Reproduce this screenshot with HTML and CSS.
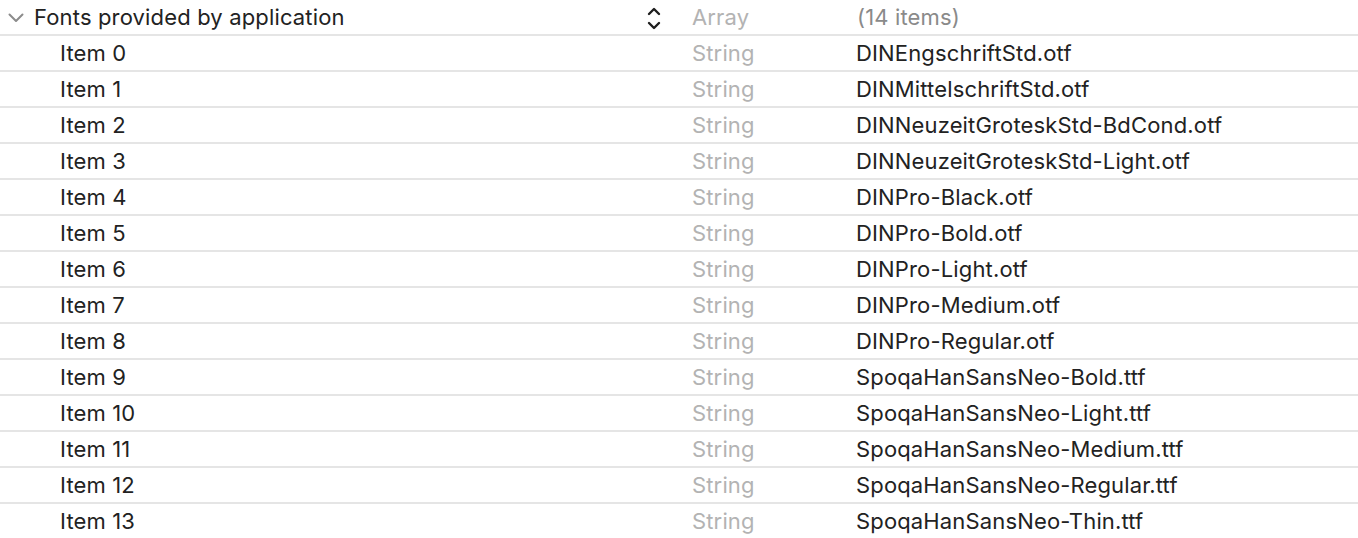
FILE: index.html
```html
<!DOCTYPE html>
<html>
<head>
<meta charset="utf-8">
<link rel="stylesheet" href="styles.css">
</head>
<body>
<div class="table">
  <div class="row parent">
    <div class="key">
      <svg class="disclosure" width="16" height="10" viewBox="0 0 16 10"><path d="M1.5 1.5 L8 8 L14.5 1.5" fill="none" stroke="#8c8c8c" stroke-width="2" stroke-linecap="round" stroke-linejoin="round"/></svg>
      <span>Fonts provided by application</span>
    </div>
    <div class="stepper">
      <svg width="14" height="24" viewBox="0 0 14 24"><path d="M2 7 L7 2 L12 7" fill="none" stroke="#1e1e1e" stroke-width="2.4" stroke-linecap="round" stroke-linejoin="round"/><path d="M2 16 L7 21 L12 16" fill="none" stroke="#1e1e1e" stroke-width="2.4" stroke-linecap="round" stroke-linejoin="round"/></svg>
    </div>
    <div class="type">Array</div>
    <div class="value muted">(14 items)</div>
  </div>
  <div class="row"><div class="key child">Item 0</div><div class="stepper"></div><div class="type">String</div><div class="value">DINEngschriftStd.otf</div></div>
  <div class="row"><div class="key child">Item 1</div><div class="stepper"></div><div class="type">String</div><div class="value">DINMittelschriftStd.otf</div></div>
  <div class="row"><div class="key child">Item 2</div><div class="stepper"></div><div class="type">String</div><div class="value">DINNeuzeitGroteskStd-BdCond.otf</div></div>
  <div class="row"><div class="key child">Item 3</div><div class="stepper"></div><div class="type">String</div><div class="value">DINNeuzeitGroteskStd-Light.otf</div></div>
  <div class="row"><div class="key child">Item 4</div><div class="stepper"></div><div class="type">String</div><div class="value">DINPro-Black.otf</div></div>
  <div class="row"><div class="key child">Item 5</div><div class="stepper"></div><div class="type">String</div><div class="value">DINPro-Bold.otf</div></div>
  <div class="row"><div class="key child">Item 6</div><div class="stepper"></div><div class="type">String</div><div class="value">DINPro-Light.otf</div></div>
  <div class="row"><div class="key child">Item 7</div><div class="stepper"></div><div class="type">String</div><div class="value">DINPro-Medium.otf</div></div>
  <div class="row"><div class="key child">Item 8</div><div class="stepper"></div><div class="type">String</div><div class="value">DINPro-Regular.otf</div></div>
  <div class="row"><div class="key child">Item 9</div><div class="stepper"></div><div class="type">String</div><div class="value">SpoqaHanSansNeo-Bold.ttf</div></div>
  <div class="row"><div class="key child">Item 10</div><div class="stepper"></div><div class="type">String</div><div class="value">SpoqaHanSansNeo-Light.ttf</div></div>
  <div class="row"><div class="key child">Item 11</div><div class="stepper"></div><div class="type">String</div><div class="value">SpoqaHanSansNeo-Medium.ttf</div></div>
  <div class="row"><div class="key child">Item 12</div><div class="stepper"></div><div class="type">String</div><div class="value">SpoqaHanSansNeo-Regular.ttf</div></div>
  <div class="row"><div class="key child">Item 13</div><div class="stepper"></div><div class="type">String</div><div class="value">SpoqaHanSansNeo-Thin.ttf</div></div>
</div>
</body>
</html>
```
FILE: styles.css
```css
html, body {
  margin: 0;
  padding: 0;
  background: #ffffff;
}
body {
  font-family: Inter, "Noto Sans", sans-serif;
  font-size: 22px;
  letter-spacing: 0.15px;
  color: #222222;
  overflow: hidden;
}
.table {
  display: flex;
  flex-direction: column;
}
.row {
  display: grid;
  grid-template-columns: 647px 45px 164px 1fr;
  height: 34px;
  align-items: center;
  border-bottom: 2px solid #e5e5e5;
  white-space: nowrap;
  line-height: 32px;
}
.key {
  display: flex;
  align-items: center;
}
.parent .key {
  padding-left: 8px;
}
.disclosure {
  margin-right: 10px;
  margin-top: 2px;
}
.child {
  padding-left: 60px;
}
.stepper {
  display: flex;
  align-self: start;
}
.stepper svg {
  margin-top: 7px;
}
.type {
  color: #b3b3b3;
}
.value {
  color: #222222;
}
.value.muted {
  color: #8a8a8a;
  padding-left: 1px;
}
```
